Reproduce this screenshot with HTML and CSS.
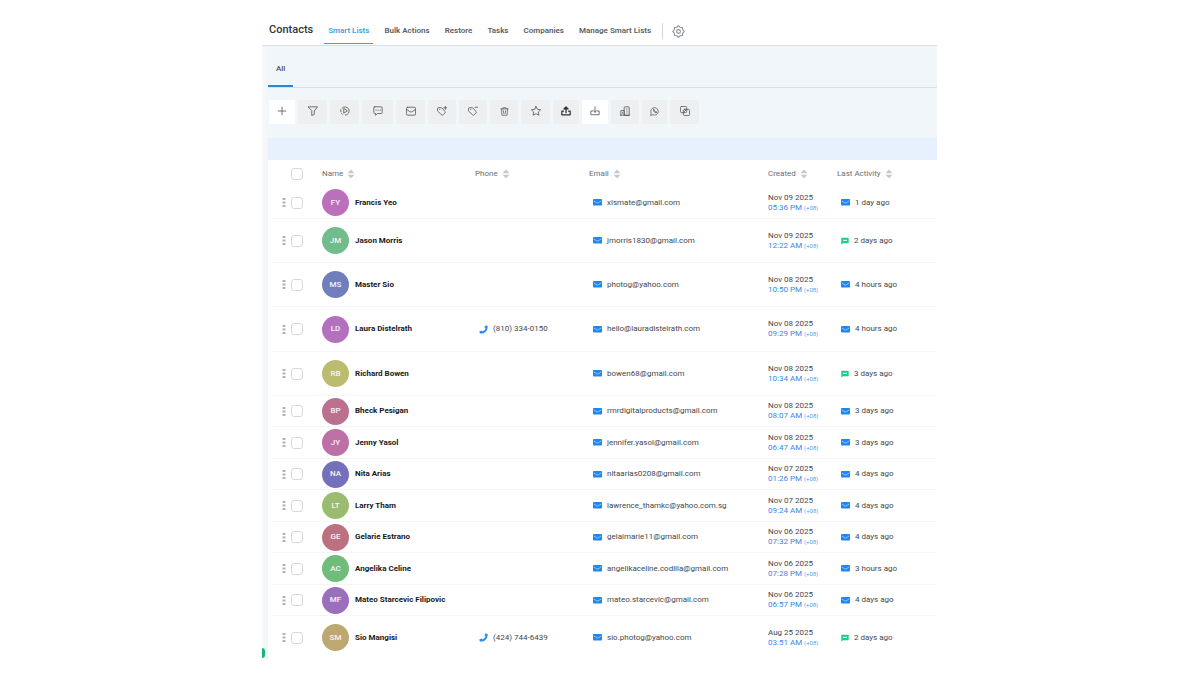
FILE: index.html
```html
<!DOCTYPE html>
<html lang="en">
<head>
<meta charset="utf-8">
<meta name="viewport" content="width=device-width, initial-scale=1">
<title>Contacts</title>
<link rel="stylesheet" href="styles.css">
</head>
<body>
<svg class="sprite" aria-hidden="true">
  <symbol id="sort" viewBox="0 0 8 10"><path d="M4 .5 7.500 4.300H.5zM4 9.500.5 5.700h7z" fill="#c6c9cc"/></symbol>
  <symbol id="mail" viewBox="0 0 9 7"><rect width="9" height="6.500" rx=".8" fill="#1e88f0"/><path d="M.8 1.900 3.500 3.700q1 .6 2 0L8.200 1.900" fill="none" stroke="#c5e2ff" stroke-width=".7"/></symbol>
  <symbol id="phone" viewBox="0 0 9 9"><path d="M6.600.3 8.600.9C9 5.600 5.600 8.900.9 8.600L.3 6.500 2.700 5.500 3.600 6.600Q5.700 5.600 6.600 3.600L5.500 2.700z" fill="#2a8bf0"/></symbol>
  <symbol id="chat" viewBox="0 0 8 8"><path d="M1 .8h6q.7 0 .7.7v4q0 .7-.7.7H2L.3 7.600V1.500Q.3.800 1 .8z" fill="#17cf86"/><path d="M2 3.400h4" stroke="#e6fff4" stroke-width="1.200"/></symbol>
  <symbol id="dots" viewBox="0 0 4 9"><path d="M.5 0h3v2h-3zM.5 3.500h3v2h-3zM.5 7h3v2h-3z" fill="#b0b3b6"/></symbol>
</svg>
<div class="app">
  <header class="topbar">
    <h1 class="title">Contacts</h1>
    <nav class="nav">
      <a class="nav-link active" href="#">Smart Lists</a>
      <a class="nav-link" href="#">Bulk Actions</a>
      <a class="nav-link" href="#">Restore</a>
      <a class="nav-link" href="#">Tasks</a>
      <a class="nav-link" href="#">Companies</a>
      <a class="nav-link" href="#">Manage Smart Lists</a>
    </nav>
    <button class="gear" aria-label="Settings"><svg viewBox="0 0 24 24"><path d="M12 1.500 15 4.200 19.400 4.600 19.800 9 22.500 12 19.800 15 19.400 19.400 15 19.800 12 22.500 9 19.800 4.600 19.400 4.200 15 1.500 12 4.200 9 4.600 4.600 9 4.200z"/><circle cx="12" cy="12" r="3.500"/></svg></button>
  </header>
  <main class="main">
    <nav class="tabs"><a class="tab" href="#">All</a></nav>
    <div class="toolbar">
      <button class="tool light" aria-label="Add"><svg viewBox="0 0 24 24"><path d="M12 3v18M3 12h18"/></svg></button>
      <button class="tool" aria-label="Filter"><svg viewBox="0 0 24 24"><path d="M1 2h22l-8 10v8l-6 3V12z"/></svg></button>
      <button class="tool" aria-label="Automation"><svg viewBox="0 0 24 24"><path d="M5 5a10 10 0 1 1 8 17M2 9v5M4 18l2 2M9 7v10l8-5z"/></svg></button>
      <button class="tool" aria-label="Send SMS"><svg viewBox="0 0 24 24"><path d="M4 2h16q2 0 2 2v12q0 2-2 2h-9l-5 4v-4H4q-2 0-2-2V4q0-2 2-2zM7 10h1M12 10h1M17 10h1"/></svg></button>
      <button class="tool" aria-label="Send email"><svg viewBox="0 0 24 24"><rect x="1" y="3" width="22" height="19" rx="3"/><path d="m1 8 9 6q2 1 4 0l9-6"/></svg></button>
      <button class="tool" aria-label="Add tag"><svg viewBox="0 0 24 24"><path d="M1 11V7q0-3 3-3h5q2 0 3 1l7 8q2 2 0 4l-4 4q-2 2-4 0l-9-8zM6 8h1M20 1v7M16 4.500h8"/></svg></button>
      <button class="tool" aria-label="Remove tag"><svg viewBox="0 0 24 24"><path d="M1 11V7q0-3 3-3h5q2 0 3 1l7 8q2 2 0 4l-4 4q-2 2-4 0l-9-8zM6 8h1M17 3h7"/></svg></button>
      <button class="tool small" aria-label="Delete"><svg viewBox="0 0 24 24"><path d="M2 5h20M8 5V2h8v3M4 5l1 17h14l1-17M9 10l1 7M15 10l-1 7"/></svg></button>
      <button class="tool" aria-label="Review request"><svg viewBox="0 0 24 24"><path d="m12 1 3.500 7 7.500 1-5.500 5.500L19 22l-7-3.500L5 22l1.500-7.500L1 9l7.500-1z"/></svg></button>
      <button class="tool dark" aria-label="Export"><svg viewBox="0 0 24 24"><path d="M6 12H2v9h20v-9h-4M12 16V3M7 7l5-5 5 5z"/></svg></button>
      <button class="tool light" aria-label="Import"><svg viewBox="0 0 24 24"><path d="M6 12H2v9h20v-9h-4M12 2v13M8 11l4 4 4-4"/></svg></button>
      <button class="tool" aria-label="Company"><svg viewBox="0 0 24 24"><path d="M2 22V11h8v11M10 22V4q0-2 2-2h8q2 0 2 2v18zM1 22h22M16 7h1M16 12h1M16 17h1M6 16v1"/></svg></button>
      <button class="tool small" aria-label="WhatsApp"><svg viewBox="0 0 24 24"><path d="m2 22 1-6a10 10 0 1 1 5 5zM9 7q-1 7 8 9l1-3-3-1-1 1-3-3 1-1-1-2z"/></svg></button>
      <button class="tool" aria-label="Merge"><svg viewBox="0 0 24 24"><rect x="1" y="1" width="15" height="15" rx="3"/><rect x="8" y="8" width="15" height="15" rx="3"/><path d="m9 15 6-6"/></svg></button>
    </div>
    <div class="banner"></div>
    <div class="sheet">
    <table class="contacts">
      <colgroup><col class="c-drag"><col class="c-check"><col class="c-name"><col class="c-phone"><col class="c-email"><col class="c-created"><col></colgroup>
      <thead>
        <tr><th></th><th class="pick"><input type="checkbox" aria-label="Select all"></th>
        <th><div class="head">Name <svg class="sort"><use href="#sort"/></svg></div></th>
        <th><div class="head">Phone <svg class="sort"><use href="#sort"/></svg></div></th>
        <th><div class="head">Email <svg class="sort"><use href="#sort"/></svg></div></th>
        <th><div class="head">Created <svg class="sort"><use href="#sort"/></svg></div></th>
        <th><div class="head">Last Activity <svg class="sort"><use href="#sort"/></svg></div></th></tr>
      </thead>
      <tbody>
        <tr><td><svg class="dots"><use href="#dots"/></svg></td><td><input type="checkbox" aria-label="Select Francis Yeo"></td>
          <td><div class="person"><span class="avatar fy">FY</span><b>Francis Yeo</b></div></td><td></td>
          <td><div class="item"><svg class="mail"><use href="#mail"/></svg>xlsmate@gmail.com</div></td>
          <td>Nov 09 2025<div class="time">05:36 PM <small>(+08)</small></div></td>
          <td><div class="item"><svg class="mail"><use href="#mail"/></svg>1 day ago</div></td></tr>
        <tr class="tall"><td><svg class="dots"><use href="#dots"/></svg></td><td><input type="checkbox" aria-label="Select Jason Morris"></td>
          <td><div class="person"><span class="avatar jm">JM</span><b>Jason Morris</b></div></td><td></td>
          <td><div class="item"><svg class="mail"><use href="#mail"/></svg>jmorris1830@gmail.com</div></td>
          <td>Nov 09 2025<div class="time">12:22 AM <small>(+08)</small></div></td>
          <td><div class="item"><svg class="chat"><use href="#chat"/></svg>2 days ago</div></td></tr>
        <tr class="tall"><td><svg class="dots"><use href="#dots"/></svg></td><td><input type="checkbox" aria-label="Select Master Sio"></td>
          <td><div class="person"><span class="avatar ms">MS</span><b>Master Sio</b></div></td><td></td>
          <td><div class="item"><svg class="mail"><use href="#mail"/></svg>photog@yahoo.com</div></td>
          <td>Nov 08 2025<div class="time">10:50 PM <small>(+08)</small></div></td>
          <td><div class="item"><svg class="mail"><use href="#mail"/></svg>4 hours ago</div></td></tr>
        <tr class="taller"><td><svg class="dots"><use href="#dots"/></svg></td><td><input type="checkbox" aria-label="Select Laura Distelrath"></td>
          <td><div class="person"><span class="avatar ld">LD</span><b>Laura Distelrath</b></div></td>
          <td><div class="item"><svg class="phone"><use href="#phone"/></svg>(810) 334-0150</div></td>
          <td><div class="item"><svg class="mail"><use href="#mail"/></svg>hello@lauradistelrath.com</div></td>
          <td>Nov 08 2025<div class="time">09:29 PM <small>(+08)</small></div></td>
          <td><div class="item"><svg class="mail"><use href="#mail"/></svg>4 hours ago</div></td></tr>
        <tr class="tall"><td><svg class="dots"><use href="#dots"/></svg></td><td><input type="checkbox" aria-label="Select Richard Bowen"></td>
          <td><div class="person"><span class="avatar rb">RB</span><b>Richard Bowen</b></div></td><td></td>
          <td><div class="item"><svg class="mail"><use href="#mail"/></svg>bowen68@gmail.com</div></td>
          <td>Nov 08 2025<div class="time">10:34 AM <small>(+08)</small></div></td>
          <td><div class="item"><svg class="chat"><use href="#chat"/></svg>3 days ago</div></td></tr>
        <tr class="short"><td><svg class="dots"><use href="#dots"/></svg></td><td><input type="checkbox" aria-label="Select Bheck Pesigan"></td>
          <td><div class="person"><span class="avatar bp">BP</span><b>Bheck Pesigan</b></div></td><td></td>
          <td><div class="item"><svg class="mail"><use href="#mail"/></svg>rmrdigitalproducts@gmail.com</div></td>
          <td>Nov 08 2025<div class="time">08:07 AM <small>(+08)</small></div></td>
          <td><div class="item"><svg class="mail"><use href="#mail"/></svg>3 days ago</div></td></tr>
        <tr><td><svg class="dots"><use href="#dots"/></svg></td><td><input type="checkbox" aria-label="Select Jenny Yasol"></td>
          <td><div class="person"><span class="avatar jy">JY</span><b>Jenny Yasol</b></div></td><td></td>
          <td><div class="item"><svg class="mail"><use href="#mail"/></svg>jennifer.yasol@gmail.com</div></td>
          <td>Nov 08 2025<div class="time">06:47 AM <small>(+08)</small></div></td>
          <td><div class="item"><svg class="mail"><use href="#mail"/></svg>3 days ago</div></td></tr>
        <tr class="short"><td><svg class="dots"><use href="#dots"/></svg></td><td><input type="checkbox" aria-label="Select Nita Arias"></td>
          <td><div class="person"><span class="avatar na">NA</span><b>Nita Arias</b></div></td><td></td>
          <td><div class="item"><svg class="mail"><use href="#mail"/></svg>nitaarias0208@gmail.com</div></td>
          <td>Nov 07 2025<div class="time">01:26 PM <small>(+08)</small></div></td>
          <td><div class="item"><svg class="mail"><use href="#mail"/></svg>4 days ago</div></td></tr>
        <tr><td><svg class="dots"><use href="#dots"/></svg></td><td><input type="checkbox" aria-label="Select Larry Tham"></td>
          <td><div class="person"><span class="avatar lt">LT</span><b>Larry Tham</b></div></td><td></td>
          <td><div class="item"><svg class="mail"><use href="#mail"/></svg>lawrence_thamkc@yahoo.com.sg</div></td>
          <td>Nov 07 2025<div class="time">09:24 AM <small>(+08)</small></div></td>
          <td><div class="item"><svg class="mail"><use href="#mail"/></svg>4 days ago</div></td></tr>
        <tr class="short"><td><svg class="dots"><use href="#dots"/></svg></td><td><input type="checkbox" aria-label="Select Gelarie Estrano"></td>
          <td><div class="person"><span class="avatar ge">GE</span><b>Gelarie Estrano</b></div></td><td></td>
          <td><div class="item"><svg class="mail"><use href="#mail"/></svg>gelaimarie11@gmail.com</div></td>
          <td>Nov 06 2025<div class="time">07:32 PM <small>(+08)</small></div></td>
          <td><div class="item"><svg class="mail"><use href="#mail"/></svg>4 days ago</div></td></tr>
        <tr><td><svg class="dots"><use href="#dots"/></svg></td><td><input type="checkbox" aria-label="Select Angelika Celine"></td>
          <td><div class="person"><span class="avatar ac">AC</span><b>Angelika Celine</b></div></td><td></td>
          <td><div class="item"><svg class="mail"><use href="#mail"/></svg>angelikaceline.codilla@gmail.com</div></td>
          <td>Nov 06 2025<div class="time">07:28 PM <small>(+08)</small></div></td>
          <td><div class="item"><svg class="mail"><use href="#mail"/></svg>3 hours ago</div></td></tr>
        <tr class="short"><td><svg class="dots"><use href="#dots"/></svg></td><td><input type="checkbox" aria-label="Select Mateo Starcevic Filipovic"></td>
          <td><div class="person"><span class="avatar mf">MF</span><b>Mateo Starcevic Filipovic</b></div></td><td></td>
          <td><div class="item"><svg class="mail"><use href="#mail"/></svg>mateo.starcevic@gmail.com</div></td>
          <td>Nov 06 2025<div class="time">06:57 PM <small>(+08)</small></div></td>
          <td><div class="item"><svg class="mail"><use href="#mail"/></svg>4 days ago</div></td></tr>
        <tr class="tall"><td><svg class="dots"><use href="#dots"/></svg></td><td><input type="checkbox" aria-label="Select Sio Mangisi"></td>
          <td><div class="person"><span class="avatar sm">SM</span><b>Sio Mangisi</b></div></td>
          <td><div class="item"><svg class="phone"><use href="#phone"/></svg>(424) 744-6439</div></td>
          <td><div class="item"><svg class="mail"><use href="#mail"/></svg>sio.photog@yahoo.com</div></td>
          <td>Aug 25 2025<div class="time">03:51 AM <small>(+08)</small></div></td>
          <td><div class="item"><svg class="chat"><use href="#chat"/></svg>2 days ago</div></td></tr>
      </tbody>
    </table>
    </div>
    <span class="online"></span>
  </main>
</div>
</body>
</html>
```

FILE: styles.css
```css
* { box-sizing: border-box; }
body {
  margin: 0;
  background: #fff;
  color: #45484c;
  font: 8px/10px Roboto, "Liberation Sans", sans-serif;
  display: grid;
  grid-template-columns: minmax(0, 262px) minmax(675px, 1fr) minmax(0, 263px);
}
.sprite { position: absolute; width: 0; height: 0; }
.app { grid-column: 2; }
a { color: inherit; text-decoration: none; }
button { border: 0; padding: 0; background: none; }
svg { display: block; flex: none; }

.topbar {
  display: flex;
  align-items: flex-end;
  height: 46px;
  padding-left: 7px;
  border-bottom: 1px solid #dcdfe1;
}
.title {
  margin: 0 11px 0 0;
  padding-bottom: 7px;
  font-size: 11px;
  line-height: 16px;
  font-weight: 500;
  color: #30343a;
}
.nav { display: flex; gap: 7px; }
.nav-link {
  padding: 0 4px 7px;
  border-bottom: 1px solid transparent;
  font-weight: 600;
  color: #5a5e63;
  margin-bottom: 1px;
}
.active { color: #3ba3e4; border-color: #3ba3e4; }
.gear {
  height: 16px;
  margin: 0 0 6px 7px;
  padding-left: 9px;
  border-left: 1px solid #d4d6d8;
}
.gear svg { width: 13px; height: 13px; fill: none; stroke: #8a8e92; stroke-width: 2; }

.main {
  position: relative;
  padding-left: 6px;
  background: linear-gradient(90deg, #f7f9fa, #f2f5f7 6px, #f0f6f9 6px);
}
.tabs { display: flex; height: 42px; border-bottom: 1px solid #d9e1e6; }
.tab {
  height: 41px;
  padding: 18px 8px 0;
  border-bottom: 2px solid #2a86d9;
  font-weight: 500;
  color: #505459;
}
.toolbar {
  display: grid;
  grid-template-columns: 26px 29px 29px 31px 29px 28px 28px 28px 29px 26px 26px 28px 25px 29px;
  gap: 3px;
  padding: 12px 1px 14px;
}
.tool {
  display: grid;
  place-items: center;
  height: 24px;
  padding-bottom: 2px;
  border-radius: 2px;
  background: #eeeff0;
}
.tool svg {
  width: 10px;
  height: 10px;
  fill: none;
  stroke: #55585c;
  stroke-width: 2;
  stroke-linejoin: round;
  stroke-linecap: round;
}
.small svg { width: 9px; height: 9px; }
.light { background: #fff; }
.dark svg { stroke: #2f3235; stroke-width: 3; }
.banner { height: 22px; background: #e6f1fd; }

.sheet { padding-left: 4px; background: #fff; }
.contacts { width: 100%; table-layout: fixed; border-collapse: separate; border-spacing: 0; }
.c-drag { width: 19px; }
.c-check { width: 31px; }
.c-name { width: 153px; }
.c-phone { width: 114px; }
.c-email { width: 179px; }
.c-created { width: 69px; }
th, td { padding: 0; text-align: left; vertical-align: middle; white-space: nowrap; }
th { height: 27px; font-weight: 400; color: #6a6e73; }
.head { display: flex; align-items: center; gap: 4px; padding-top: 1px; }
.sort { width: 8px; height: 10px; }
td { height: 32px; border-bottom: 1px solid #f4f5f7; }
.short td { height: 31px; }
.tall td { height: 44px; }
.taller td { height: 45px; }
tbody tr:last-child td { height: 43px; border-bottom: 0; }
input[type="checkbox"] {
  appearance: none;
  display: block;
  width: 12px;
  height: 12px;
  margin: 0;
  border: 1px solid #d6d9dc;
  border-radius: 3px;
  background: #fff;
}
.dots { width: 4px; height: 9px; margin-left: 10px; }
.person { display: flex; align-items: center; gap: 6px; color: #17191c; }
.person b { font-weight: 700; }
.avatar {
  display: grid;
  place-items: center;
  width: 27px;
  height: 27px;
  border-radius: 50%;
  color: #f8f3f8;
  font-weight: 500;
}
.fy { background: #bc70bb; }
.jm { background: #70bc8c; }
.ms { background: #707ebc; }
.ld { background: #b370bc; }
.rb { background: #bcbc70; }
.bp { background: #bc7090; }
.jy { background: #bc70a6; }
.na { background: #7670bc; }
.lt { background: #9abc70; }
.ge { background: #bc7080; }
.ac { background: #70bc7a; }
.mf { background: #9a70bc; }
.sm { background: #bca870; }
.item { display: flex; align-items: center; gap: 5px; padding-left: 4px; }
.mail { width: 9px; height: 7px; }
.phone { width: 9px; height: 9px; }
.chat { width: 8px; height: 8px; }
.time { color: #3787ee; }
.time small { font-size: 6px; color: #5d9df2; }
.online {
  position: absolute;
  left: 0;
  bottom: 1px;
  width: 3px;
  height: 10px;
  border-radius: 0 5px 5px 0;
  background: #1cb37b;
}
```
